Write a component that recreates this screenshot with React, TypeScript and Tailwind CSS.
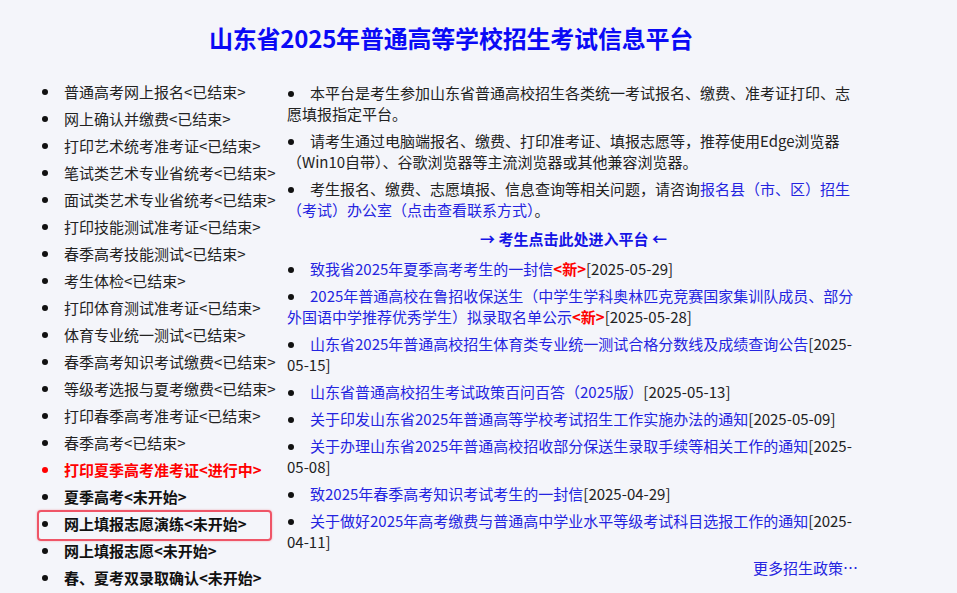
import React from "react";

type LeftItem = { text: string; kind: "done" | "now" | "todo"; boxed?: boolean };

const leftItems: LeftItem[] = [
  { text: "普通高考网上报名<已结束>", kind: "done" },
  { text: "网上确认并缴费<已结束>", kind: "done" },
  { text: "打印艺术统考准考证<已结束>", kind: "done" },
  { text: "笔试类艺术专业省统考<已结束>", kind: "done" },
  { text: "面试类艺术专业省统考<已结束>", kind: "done" },
  { text: "打印技能测试准考证<已结束>", kind: "done" },
  { text: "春季高考技能测试<已结束>", kind: "done" },
  { text: "考生体检<已结束>", kind: "done" },
  { text: "打印体育测试准考证<已结束>", kind: "done" },
  { text: "体育专业统一测试<已结束>", kind: "done" },
  { text: "春季高考知识考试缴费<已结束>", kind: "done" },
  { text: "等级考选报与夏考缴费<已结束>", kind: "done" },
  { text: "打印春季高考准考证<已结束>", kind: "done" },
  { text: "春季高考<已结束>", kind: "done" },
  { text: "打印夏季高考准考证<进行中>", kind: "now" },
  { text: "夏季高考<未开始>", kind: "todo" },
  { text: "网上填报志愿演练<未开始>", kind: "todo", boxed: true },
  { text: "网上填报志愿<未开始>", kind: "todo" },
  { text: "春、夏考双录取确认<未开始>", kind: "todo" },
];

type News = { title: string; isNew?: boolean; date: string };

const news: News[] = [
  { title: "致我省2025年夏季高考考生的一封信", isNew: true, date: "2025-05-29" },
  {
    title: "2025年普通高校在鲁招收保送生（中学生学科奥林匹克竞赛国家集训队成员、部分外国语中学推荐优秀学生）拟录取名单公示",
    isNew: true,
    date: "2025-05-28",
  },
  { title: "山东省2025年普通高校招生体育类专业统一测试合格分数线及成绩查询公告", date: "2025-05-15" },
  { title: "山东省普通高校招生考试政策百问百答（2025版）", date: "2025-05-13" },
  { title: "关于印发山东省2025年普通高等学校考试招生工作实施办法的通知", date: "2025-05-09" },
  { title: "关于办理山东省2025年普通高校招收部分保送生录取手续等相关工作的通知", date: "2025-05-08" },
  { title: "致2025年春季高考知识考试考生的一封信", date: "2025-04-29" },
  { title: "关于做好2025年高考缴费与普通高中学业水平等级考试科目选报工作的通知", date: "2025-04-11" },
];

function Dot({ red }: { red?: boolean }) {
  return (
    <span
      className={
        "inline-block w-[6px] h-[6px] rounded-full align-middle ml-[1px] mr-[16px] relative -top-[1px] " +
        (red ? "bg-[#ff0000]" : "bg-[#111]")
      }
    />
  );
}

export default function App() {
  return (
    <div
      className="min-h-[593px] bg-[#f4f5fa] text-[#222] text-[15px]"
      style={{ fontFamily: '"Noto Sans CJK SC", "Noto Sans", sans-serif' }}
    >
      <div className="ml-[42px] w-[818px] pt-[22px]">
        <h1 className="text-center text-[24px] leading-[32px] font-bold tracking-[-0.2px] text-[#0a0af5]">
          山东省2025年普通高等学校招生考试信息平台
        </h1>
        <div className="flex mt-[27px]">
          <ul className="w-[245px] shrink-0">
            {leftItems.map((it) => (
              <li key={it.text} className="relative flex items-center leading-[21px] mb-[6px]">
                <span
                  className={
                    "w-[6px] h-[6px] rounded-full shrink-0 mr-[16px] " +
                    (it.kind === "now" ? "bg-[#ff0000]" : "bg-[#111]")
                  }
                />
                <span
                  className={
                    it.kind === "now"
                      ? "font-bold text-[#ff0000]"
                      : it.kind === "todo"
                      ? "font-bold text-[#111]"
                      : "text-[#222]"
                  }
                >
                  {it.text}
                </span>
                {it.boxed && (
                  <span className="absolute left-[-5px] top-[-3px] w-[235px] h-[31px] border-2 border-[#ef5567] rounded-[4px] shadow-[0_0_2px_rgba(239,85,103,0.5)] pointer-events-none" />
                )}
              </li>
            ))}
          </ul>
          <div className="w-[573px] shrink-0 pt-[1px]">
            <ul>
              <li className="leading-[21px] mb-[6px]">
                <Dot />
                本平台是考生参加山东省普通高校招生各类统一考试报名、缴费、准考证打印、志愿填报指定平台。
              </li>
              <li className="leading-[21px] mb-[6px]">
                <Dot />
                请考生通过电脑端报名、缴费、打印准考证、填报志愿等，推荐使用Edge浏览器（Win10自带）、谷歌浏览器等主流浏览器或其他兼容浏览器。
              </li>
              <li className="leading-[21px] mb-[6px]">
                <Dot />
                考生报名、缴费、志愿填报、信息查询等相关问题，请咨询
                <a className="text-[#2424e0]">报名县（市、区）招生（考试）办公室（点击查看联系方式）</a>。
              </li>
            </ul>
            <div className="text-center font-bold text-[#1414e6] leading-[21px] mt-[8px]">
              → 考生点击此处进入平台 ←
            </div>
            <ul className="mt-[9px]">
              {news.map((n) => (
                <li key={n.title} className="leading-[21px] mb-[6px]">
                  <Dot />
                  <a className="text-[#2424e0]">{n.title}</a>
                  {n.isNew && <span className="text-[#ff0000] font-bold">&lt;新&gt;</span>}
                  <span className="text-[#222]">[{n.date}]</span>
                </li>
              ))}
            </ul>
            <div className="text-right leading-[21px] text-[#2424e0] pr-[2px] -mt-[1px]">更多招生政策…</div>
          </div>
        </div>
      </div>
    </div>
  );
}
